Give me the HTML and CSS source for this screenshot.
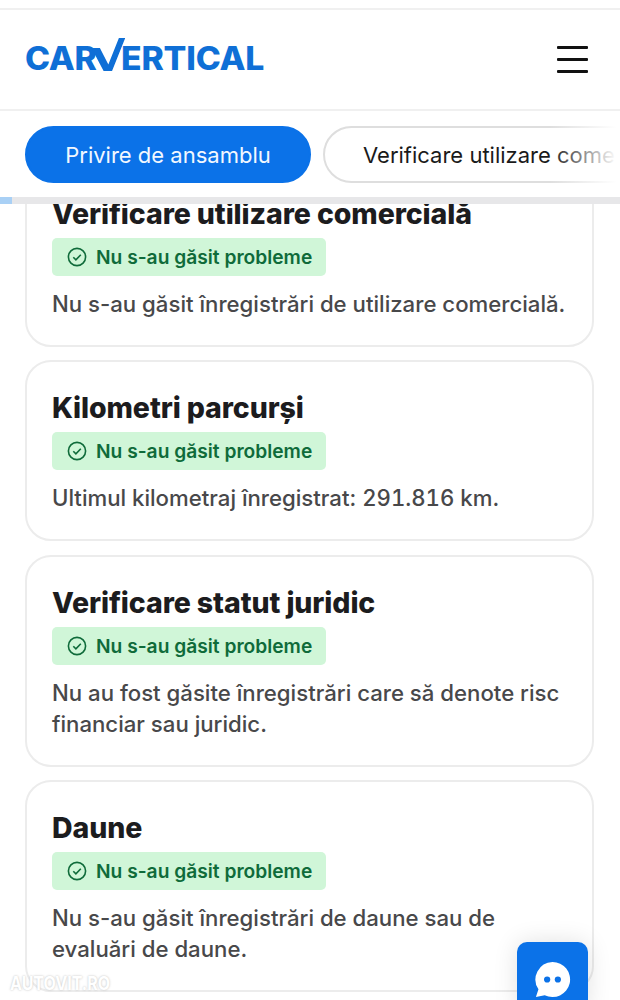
FILE: index.html
```html
<!DOCTYPE html>
<html lang="ro">
<head>
<meta charset="utf-8">
<title>carVertical</title>
<link rel="stylesheet" href="styles.css">
</head>
<body>
<div class="page">
  <header class="header">
    <div class="logo"><span>CAR</span><svg class="logo-v" viewBox="0 0 32 33" aria-hidden="true"><path d="M0 10h8l8 16.500L26 0h6L19.500 33h-8z"/></svg><span>ERTICAL</span></div>
    <div class="burger"><i></i><i></i><i></i></div>
  </header>
  <nav class="tabs">
    <div class="tab active">Privire de ansamblu</div>
    <div class="tab">Verificare utilizare comercială</div>
    <div class="fade"></div>
  </nav>
  <div class="progress"><div class="progress-fill"></div></div>
  <main class="content">
    <div class="cards">
      <section class="card">
        <h2>Verificare utilizare comercială</h2>
        <div class="badge"><svg viewBox="0 0 20 20"><circle cx="10" cy="10" r="8.600"/><path d="M6.300 10.300l2.600 2.600 4.900-5.200"/></svg>Nu s-au găsit probleme</div>
        <p>Nu s-au găsit înregistrări de utilizare comercială.</p>
      </section>
      <section class="card">
        <h2>Kilometri parcurși</h2>
        <div class="badge"><svg viewBox="0 0 20 20"><circle cx="10" cy="10" r="8.600"/><path d="M6.300 10.300l2.600 2.600 4.900-5.200"/></svg>Nu s-au găsit probleme</div>
        <p>Ultimul kilometraj înregistrat: <span class="num">291.816</span> km.</p>
      </section>
      <section class="card">
        <h2>Verificare statut juridic</h2>
        <div class="badge"><svg viewBox="0 0 20 20"><circle cx="10" cy="10" r="8.600"/><path d="M6.300 10.300l2.600 2.600 4.900-5.200"/></svg>Nu s-au găsit probleme</div>
        <p>Nu au fost găsite înregistrări care să denote risc financiar sau juridic.</p>
      </section>
      <section class="card">
        <h2>Daune</h2>
        <div class="badge"><svg viewBox="0 0 20 20"><circle cx="10" cy="10" r="8.600"/><path d="M6.300 10.300l2.600 2.600 4.900-5.200"/></svg>Nu s-au găsit probleme</div>
        <p>Nu s-au găsit înregistrări de daune sau de evaluări de daune.</p>
      </section>
    </div>
  </main>
  <div class="watermark">AUTOVIT.RO</div>
  <button class="chat" aria-label="Chat"><svg viewBox="0 0 40 40"><path d="M20 2a18 18 0 1 1-8 34.100L3 38l2.600-8A18 18 0 0 1 20 2z"/><circle cx="14.500" cy="20" r="3.200"/><circle cx="25.500" cy="20" r="3.200"/></svg></button>
</div>
</body>
</html>
```
FILE: styles.css
```css
* { box-sizing: border-box; }
html, body { margin: 0; padding: 0; }
body { background: #fff; font-family: Inter, "Liberation Sans", sans-serif; color: #1a1a1a; }
.page { position: relative; width: 620px; height: 1000px; overflow: hidden; padding-top: 8px; background: #fff; }
.header { height: 103px; display: flex; align-items: center; justify-content: space-between; padding: 0 32px 0 25px; border-top: 2px solid #f0f0f0; border-bottom: 2px solid #f0f0f0; }
.logo { display: flex; align-items: flex-end; color: #0f6fd6; font-size: 32px; font-weight: 800; line-height: 24px; height: 33px; margin-bottom: 11px; letter-spacing: -0.2px; transform: scaleX(1.055); transform-origin: left center; }
.logo-v { width: 32px; height: 33px; fill: #0f6fd6; margin: 0 -4px 0 -5px; }
.burger { display: flex; flex-direction: column; gap: 9.600px; width: 31px; }
.burger i { display: block; height: 2.400px; background: #111; border-radius: 1px; }
.tabs { position: relative; height: 86px; display: flex; align-items: center; gap: 12px; padding: 1px 0 0 25px; overflow: hidden; }
.tab { flex: none; height: 57px; padding: 0 38px; display: flex; align-items: center; border-radius: 29px; font-size: 22px; white-space: nowrap; border: 2px solid #dedede; background: #fff; color: #1a1a1a; }
.tab.active { width: 286px; padding: 0; justify-content: center; background: #0b72e8; border-color: #0b72e8; color: #f2f8ff; }
.fade { position: absolute; top: 0; right: 0; bottom: 0; width: 70px; background: linear-gradient(to right, rgba(255,255,255,0), #fff 95%); }
.progress { height: 7px; background: #e7e7e9; }
.progress-fill { width: 12px; height: 100%; background: #a9d0f5; }
.content { height: 796px; overflow: hidden; }
.cards { display: flex; flex-direction: column; gap: 13.500px; padding: 0 26px 0 25px; margin-top: -38.500px; }
.card { border: 2px solid #ececec; border-radius: 26px; background: #fff; padding: 28px 25px 26px; }
.card h2 { margin: 0 0 6px; font-size: 28.500px; line-height: 36px; font-weight: 800; color: #1c1c1e; letter-spacing: -0.1px; }
.badge { display: flex; align-items: center; gap: 9px; width: 274px; height: 38px; padding-left: 15px; border-radius: 5px; background: #d0f6d8; color: #0f6b3a; font-size: 19.200px; font-weight: 600; white-space: nowrap; }
.badge svg { width: 20px; height: 20px; fill: none; stroke: #0f6b3a; stroke-width: 1.600; flex: none; }
.card p { margin: 12px 0 0; font-size: 22.200px; line-height: 31px; font-weight: 500; color: #48484a; }
.num { font-variant-numeric: tabular-nums; }
.watermark { position: absolute; left: 10px; top: 973px; font-size: 16px; font-weight: 700; color: #fff; text-shadow: 0 0 2px #bbb; transform: scaleY(1.2); }
.chat { position: absolute; left: 517px; top: 942px; width: 71px; height: 70px; border: 0; padding: 18px 0 0; border-radius: 10px; background: #0b72e8; display: flex; justify-content: center; align-items: flex-start; box-shadow: 0 0 24px rgba(0,0,0,.12); }
.chat svg { width: 39px; height: 39px; }
.chat svg path { fill: #fff; }
.chat svg circle { fill: #0b72e8; }
```
